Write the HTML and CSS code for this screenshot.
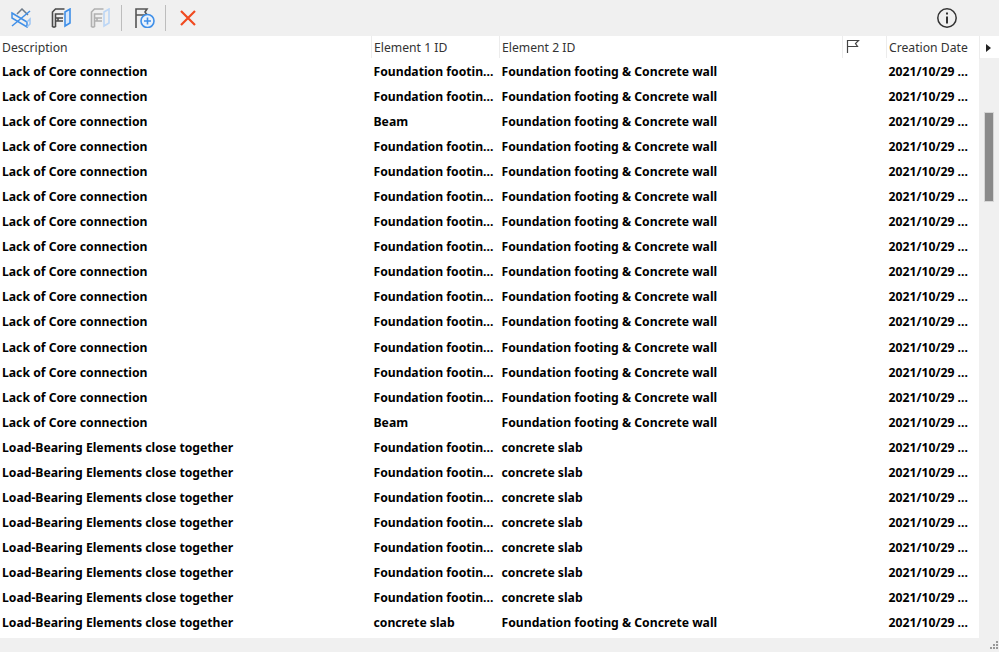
FILE: index.html
```html
<!DOCTYPE html>
<html lang="en">
<head>
  <meta charset="UTF-8" />
  <title>Issue list</title>
  <link rel="stylesheet" href="styles.css">
</head>
<body>

<div class="toolbar">
  <svg class="tool tool-first" viewBox="0 0 20 20" fill="none" stroke="#3f8fe8" stroke-width="1.500">
    <path d="M6 6l5-5 6 6" stroke="#6f7c8a"/>
    <path d="M1 18L19 3"/>
    <path d="M1 5l15 9v5L1 10z"/>
    <path d="M16 14l3-3v5l-3 3" stroke="#9cc4f2"/>
  </svg>
  <svg class="tool tool-second" viewBox="0 0 20 20" fill="none" stroke-width="1.600">
    <path d="M1.500 19V4l3-3h9M4.500 19V6h8M5 10h7M5 13h7M7 10v3" stroke="#4a4a4a"/>
    <path d="M1.500 19h3" stroke="#4a4a4a"/>
    <path d="M14 4l5-3v14l-5 3z" stroke="#3f8fe8" fill="#d6e7fb"/>
  </svg>
  <svg class="tool tool-off" viewBox="0 0 20 20" fill="none" stroke-width="1.600">
    <path d="M1.500 19V4l3-3h9M4.500 19V6h8M5 10h7M5 13h7M7 10v3" stroke="#b0b0b0"/>
    <path d="M1.500 19h3" stroke="#b0b0b0"/>
    <path d="M14 4l5-3v14l-5 3z" stroke="#bcd6f5"/>
  </svg>
  <span class="sep"></span>
  <svg class="tool tool-add" viewBox="0 0 20 20" fill="none" stroke-width="1.600">
    <path d="M1 20V1h11l-2 3 2 3H1" stroke="#555"/>
    <circle cx="12.500" cy="13" r="6.500" stroke="#3f8fe8" fill="#eaf2fc"/>
    <path d="M12.500 9.500v7M9 13h7" stroke="#3f8fe8"/>
  </svg>
  <span class="sep"></span>
  <svg class="tool-del" viewBox="0 0 16 16" fill="none" stroke="#f04a20" stroke-width="2.200">
    <path d="M1 1l14 14M15 1L1 15"/>
  </svg>
  <svg class="info" viewBox="0 0 22 22" fill="none" stroke="#333" stroke-width="1.500">
    <circle cx="11" cy="11" r="9.200"/>
    <path d="M11 9.500v7" stroke-width="2"/>
    <path d="M11 5.500v2" stroke-width="2"/>
  </svg>
</div>

<div class="head">
  <div class="col">Description</div>
  <div class="col">Element 1 ID</div>
  <div class="col">Element 2 ID</div>
  <div class="col col-flag">
    <svg width="14" height="14" viewBox="0 0 14 14" fill="none" stroke="#444" stroke-width="1.200">
      <path d="M1.500 14V1.500h11l-3 3 2 3h-10"/>
    </svg>
  </div>
  <div class="col">Creation Date</div>
  <div class="col col-more"><span class="arrow"></span></div>
</div>

<div class="body">
  <div class="rows">
    <div class="row"><span>Lack of Core connection</span><span>Foundation footin...</span><span>Foundation footing &amp; Concrete wall</span><span></span><span>2021/10/29 ...</span></div>
    <div class="row"><span>Lack of Core connection</span><span>Foundation footin...</span><span>Foundation footing &amp; Concrete wall</span><span></span><span>2021/10/29 ...</span></div>
    <div class="row"><span>Lack of Core connection</span><span>Beam</span><span>Foundation footing &amp; Concrete wall</span><span></span><span>2021/10/29 ...</span></div>
    <div class="row"><span>Lack of Core connection</span><span>Foundation footin...</span><span>Foundation footing &amp; Concrete wall</span><span></span><span>2021/10/29 ...</span></div>
    <div class="row"><span>Lack of Core connection</span><span>Foundation footin...</span><span>Foundation footing &amp; Concrete wall</span><span></span><span>2021/10/29 ...</span></div>
    <div class="row"><span>Lack of Core connection</span><span>Foundation footin...</span><span>Foundation footing &amp; Concrete wall</span><span></span><span>2021/10/29 ...</span></div>
    <div class="row"><span>Lack of Core connection</span><span>Foundation footin...</span><span>Foundation footing &amp; Concrete wall</span><span></span><span>2021/10/29 ...</span></div>
    <div class="row"><span>Lack of Core connection</span><span>Foundation footin...</span><span>Foundation footing &amp; Concrete wall</span><span></span><span>2021/10/29 ...</span></div>
    <div class="row"><span>Lack of Core connection</span><span>Foundation footin...</span><span>Foundation footing &amp; Concrete wall</span><span></span><span>2021/10/29 ...</span></div>
    <div class="row"><span>Lack of Core connection</span><span>Foundation footin...</span><span>Foundation footing &amp; Concrete wall</span><span></span><span>2021/10/29 ...</span></div>
    <div class="row"><span>Lack of Core connection</span><span>Foundation footin...</span><span>Foundation footing &amp; Concrete wall</span><span></span><span>2021/10/29 ...</span></div>
    <div class="row"><span>Lack of Core connection</span><span>Foundation footin...</span><span>Foundation footing &amp; Concrete wall</span><span></span><span>2021/10/29 ...</span></div>
    <div class="row"><span>Lack of Core connection</span><span>Foundation footin...</span><span>Foundation footing &amp; Concrete wall</span><span></span><span>2021/10/29 ...</span></div>
    <div class="row"><span>Lack of Core connection</span><span>Foundation footin...</span><span>Foundation footing &amp; Concrete wall</span><span></span><span>2021/10/29 ...</span></div>
    <div class="row"><span>Lack of Core connection</span><span>Beam</span><span>Foundation footing &amp; Concrete wall</span><span></span><span>2021/10/29 ...</span></div>
    <div class="row"><span>Load-Bearing Elements close together</span><span>Foundation footin...</span><span>concrete slab</span><span></span><span>2021/10/29 ...</span></div>
    <div class="row"><span>Load-Bearing Elements close together</span><span>Foundation footin...</span><span>concrete slab</span><span></span><span>2021/10/29 ...</span></div>
    <div class="row"><span>Load-Bearing Elements close together</span><span>Foundation footin...</span><span>concrete slab</span><span></span><span>2021/10/29 ...</span></div>
    <div class="row"><span>Load-Bearing Elements close together</span><span>Foundation footin...</span><span>concrete slab</span><span></span><span>2021/10/29 ...</span></div>
    <div class="row"><span>Load-Bearing Elements close together</span><span>Foundation footin...</span><span>concrete slab</span><span></span><span>2021/10/29 ...</span></div>
    <div class="row"><span>Load-Bearing Elements close together</span><span>Foundation footin...</span><span>concrete slab</span><span></span><span>2021/10/29 ...</span></div>
    <div class="row"><span>Load-Bearing Elements close together</span><span>Foundation footin...</span><span>concrete slab</span><span></span><span>2021/10/29 ...</span></div>
    <div class="row"><span>Load-Bearing Elements close together</span><span>concrete slab</span><span>Foundation footing &amp; Concrete wall</span><span></span><span>2021/10/29 ...</span></div>
  </div>
  <div class="scrollbar"><div class="thumb"></div></div>
</div>

<div class="status">
  <svg class="grip" width="12" height="12" viewBox="0 0 12 12" fill="#999">
    <rect x="9" y="1" width="2" height="2"/>
    <rect x="6" y="4" width="2" height="2"/>
    <rect x="9" y="4" width="2" height="2"/>
    <rect x="3" y="7" width="2" height="2"/>
    <rect x="6" y="7" width="2" height="2"/>
    <rect x="9" y="7" width="2" height="2"/>
  </svg>
</div>

</body>
</html>
```

FILE: styles.css
```css
html, body {
  margin: 0;
  padding: 0;
  height: 100%;
  overflow: hidden;
}

body {
  background-color: #f0f0f0;
  color: #000;
  font-family: "Noto Sans", "Open Sans", sans-serif;
  font-size: 12.2px;
  display: flex;
  flex-direction: column;
}

.toolbar {
  height: 36px;
  display: flex;
  align-items: center;
  padding-left: 11px;
  flex: none;
}

.tool {
  width: 20px;
  height: 20px;
  margin-right: 20px;
}

.tool-second {
  margin-right: 19px;
}

.tool-off {
  margin-right: 11px;
}

.tool-add {
  margin-right: 10px;
}

.tool-del {
  width: 16px;
  height: 16px;
  margin-left: 1px;
}

.sep {
  width: 1px;
  height: 26px;
  background-color: #bdbdbd;
  margin-right: 13px;
}

.info {
  width: 22px;
  height: 22px;
  margin-left: auto;
  margin-right: 41px;
}

.head {
  height: 22px;
  display: grid;
  grid-template-columns: 372px 128px 343px 44px 93px 19px;
  background-color: #fff;
  flex: none;
}

.col {
  padding-left: 2px;
  line-height: 23px;
  color: #333;
  border-left: 1px solid #ececec;
  margin-left: -1px;
  white-space: nowrap;
}

.col-flag {
  display: flex;
  padding: 3px 0 0 3px;
  box-sizing: border-box;
}

.col-flag svg {
  display: block;
}

.col-more {
  display: flex;
  align-items: center;
  padding-left: 6px;
}

.arrow {
  width: 0;
  height: 0;
  border-left: 5px solid #222;
  border-top: 4px solid transparent;
  border-bottom: 4px solid transparent;
}

.body {
  height: 580px;
  display: flex;
  flex: none;
}

.rows {
  width: 979px;
  background-color: #fff;
  overflow: hidden;
  padding-top: 1px;
}

.row {
  height: 25.050px;
  line-height: 25px;
  display: grid;
  grid-template-columns: 371.500px 128px 343px 44px 92.500px;
  font-weight: 700;
  white-space: nowrap;
}

.row span {
  padding-left: 2px;
  overflow: hidden;
}

.scrollbar {
  flex: 1;
  padding: 54px 5px 0 5px;
}

.thumb {
  height: 90px;
  background-color: #8a8a8a;
  border: 1px solid #d6d6d6;
  box-sizing: border-box;
}

.status {
  flex: 1;
  position: relative;
}

.grip {
  position: absolute;
  right: 0;
  bottom: 0;
}
```
